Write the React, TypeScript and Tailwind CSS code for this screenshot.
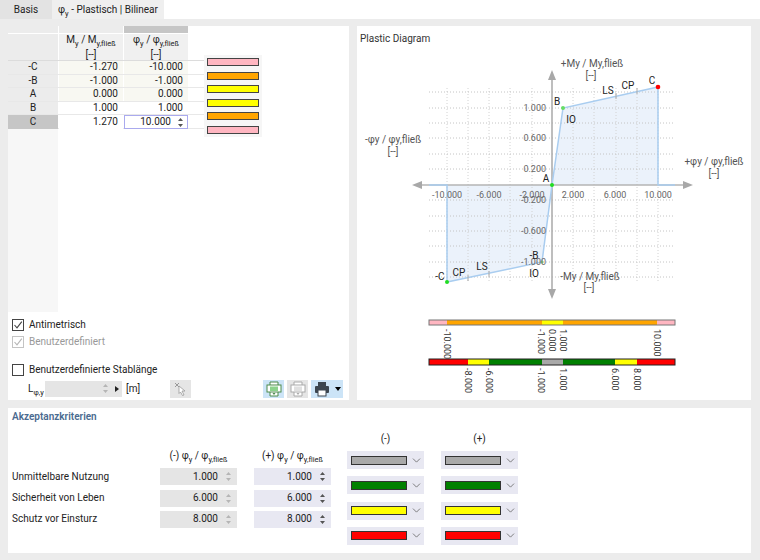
import { ChevronDown } from "lucide-react";

const rowsData = [
  { label: "-C", a: "-1.270", b: "-10.000", tint: true },
  { label: "-B", a: "-1.000", b: "-1.000", tint: true },
  { label: "A", a: "0.000", b: "0.000", tint: true },
  { label: "B", a: "1.000", b: "1.000", tint: false },
  { label: "C", a: "1.270", b: "10.000", tint: false, active: true },
];

const swatches = ["bg-[#ffb6c1]", "bg-[#ffa500]", "bg-[#ffff00]", "bg-[#ffff00]", "bg-[#ffa500]", "bg-[#ffb6c1]"];

const criteria = [
  { label: "Unmittelbare Nutzung", value: "1.000" },
  { label: "Sicherheit von Leben", value: "6.000" },
  { label: "Schutz vor Einsturz", value: "8.000" },
];

const dropdowns = ["bg-[#a9a9a9]", "bg-[#008000]", "bg-[#ffff00]", "bg-[#ff0000]"];

function Ratio({ sym }: { sym: string }) {
  return (
    <span className="whitespace-nowrap">
      {sym}
      <sub className="text-[7.5px] align-[-2px]">y</sub> / {sym}
      <sub className="text-[7.5px] align-[-2px]">y,fließ</sub>
    </span>
  );
}

function Spinner({ light }: { light?: boolean }) {
  return (
    <svg width="7" height="13" viewBox="0 0 7 13" className={light ? "fill-[#b5b5b5]" : "fill-[#555]"}>
      <path d="M3.5 2 L6 5 H1 Z M1 8 H6 L3.5 11 Z" />
    </svg>
  );
}

function Check({ disabled }: { disabled?: boolean }) {
  return (
    <span
      className={`flex h-[12px] w-[12px] items-center justify-center border ${
        disabled ? "border-[#c4c4c4]" : "border-[#444]"
      }`}
    >
      <svg width="10" height="10" viewBox="0 0 10 10" fill="none" stroke={disabled ? "#b5b5b5" : "#444"} strokeWidth="1.1">
        <path d="M1.5 5 L4 7.8 L8.8 1.6" />
      </svg>
    </span>
  );
}

function SheetIcon({ color, fill }: { color: string; fill: string }) {
  return (
    <svg width="16" height="16" viewBox="0 0 16 16">
      <path d="M4 1 H12 V15 H4 Z" fill="#fff" stroke={color} />
      <rect x="1" y="4" width="14" height="7" fill="#fff" stroke={color} />
      <rect x="4" y="5.5" width="8" height="4.5" fill={fill} />
      <path d="M6.5 12 H9.5 L8 14 Z" fill={color} />
    </svg>
  );
}

function Diagram() {
  const gridX = [447, 468, 489, 510, 532, 573, 594, 616, 637, 658];
  const gridY = [92, 108, 123, 138, 154, 169, 200, 216, 231, 246, 262, 277];
  const xTicks = [
    [447, "-10.000"],
    [489, "-6.000"],
    [532, "-2.000"],
    [573, "2.000"],
    [615, "6.000"],
    [658, "10.000"],
  ] as const;
  const yTicks = [
    [108, "1.000"],
    [138, "0.600"],
    [169, "0.200"],
    [200, "-0.200"],
    [231, "-0.600"],
    [262, "-1.000"],
  ] as const;
  const pointLabels = [
    [652, 80, "C"],
    [628, 85, "CP"],
    [608, 90, "LS"],
    [557, 101, "B"],
    [571, 119, "IO"],
    [546, 178, "A"],
    [440, 276, "-C"],
    [459, 272, "CP"],
    [482, 266, "LS"],
    [534, 255, "-B"],
    [534, 273, "IO"],
  ] as const;
  const axisLabels = [
    [592, 63, "+My / My,fließ"],
    [591, 75, "[--]"],
    [393, 139, "-φy / φy,fließ"],
    [393, 151, "[--]"],
    [714, 161, "+φy / φy,fließ"],
    [714, 173, "[--]"],
    [590, 276, "-My / My,fließ"],
    [589, 287, "[--]"],
  ] as const;
  const topBar = [
    [429, 447, "#ffb6c1"],
    [447, 542, "#ffa500"],
    [542, 563, "#ffff00"],
    [563, 657, "#ffa500"],
    [657, 675, "#ffb6c1"],
  ] as const;
  const lowBar = [
    [429, 468, "#ff0000"],
    [468, 489, "#ffff00"],
    [489, 542, "#008000"],
    [542, 563, "#a9a9a9"],
    [563, 615, "#008000"],
    [615, 637, "#ffff00"],
    [637, 675, "#ff0000"],
  ] as const;
  const topLabels = [
    [447, "-10.000"],
    [541, "-1.000"],
    [552, "0.000"],
    [563, "1.000"],
    [657, "10.000"],
  ] as const;
  const lowLabels = [
    [468, "-8.000"],
    [489, "-6.000"],
    [541, "-1.000"],
    [563, "1.000"],
    [615, "6.000"],
    [637, "8.000"],
  ] as const;

  return (
    <svg viewBox="357 50 394 350" className="h-[350px] w-[394px] text-[10px]">
      <path d="M552 185 L563 108 L658 87 V185 Z M552 185 L542 262 L447 282 V185 Z" fill="#ebf2fb" />
      {gridX.map((x) => (
        <line key={x} x1={x} x2={x} y1={88} y2={283} stroke="#d2d2d2" strokeDasharray="1 2" />
      ))}
      {gridY.map((y) => (
        <line key={y} x1={429} x2={675} y1={y} y2={y} stroke="#c4c4c4" strokeDasharray="1 2" />
      ))}
      <line x1={418} x2={687} y1={185} y2={185} stroke="#b4b4b4" strokeWidth="1.5" />
      <line x1={552} x2={552} y1={76} y2={293} stroke="#a8a8a8" strokeWidth="1.5" />
      <path d="M412 185 L422 181 V189 Z M693 185 L683 181 V189 Z M552 70 L548 80 H556 Z M552 299 L548 289 H556 Z" fill="#a8a8a8" />
      <path
        d="M429 185 H447 V282 L542 262 L552 185 L563 108 L658 87 V185 H675"
        fill="none"
        stroke="#a9cdf0"
        strokeWidth="1.5"
      />
      {[616, 637].map((x) => (
        <line key={x} x1={x} x2={x} y1={x === 616 ? 93 : 88} y2={x === 616 ? 99 : 94} stroke="#aaa" />
      ))}
      {[468, 489].map((x) => (
        <line key={x} x1={x} x2={x} y1={x === 468 ? 275 : 271} y2={x === 468 ? 281 : 277} stroke="#aaa" />
      ))}
      <circle cx={552} cy={185} r={2} fill="#22dd22" />
      <circle cx={563} cy={108} r={2} fill="#66dd66" />
      <circle cx={658} cy={87} r={2.3} fill="#ff0000" />
      <circle cx={447} cy={282} r={2} fill="#22dd22" />
      <circle cx={542} cy={262} r={1.5} fill="#88dd88" />
      {xTicks.map(([x, t]) => (
        <text key={t} x={x} y={198} textAnchor="middle" fill="#666" className="text-[9px]">
          {t}
        </text>
      ))}
      {yTicks.map(([y, t]) => (
        <text key={t} x={546} y={y + 3} textAnchor="end" fill="#666" className="text-[9px]">
          {t}
        </text>
      ))}
      {pointLabels.map(([x, y, t]) => (
        <text key={`${t}${x}`} x={x} y={y + 4} textAnchor="middle" fill="#222">
          {t}
        </text>
      ))}
      {axisLabels.map(([x, y, t]) => (
        <text key={`${t}${x}`} x={x} y={y + 4} textAnchor="middle" fill="#555">
          {t}
        </text>
      ))}
      {topBar.map(([a, b, c]) => (
        <rect key={a} x={a} y={320} width={b - a} height={5} fill={c} />
      ))}
      <rect x={429} y={320} width={246} height={5} fill="none" stroke="#777" />
      {lowBar.map(([a, b, c]) => (
        <rect key={a} x={a} y={359} width={b - a} height={6} fill={c} />
      ))}
      <rect x={429} y={359} width={246} height={6} fill="none" stroke="#222" />
      {topLabels.map(([x, t]) => (
        <text key={t} x={x - 3} y={329} transform={`rotate(90 ${x - 3} 329)`} fill="#333" className="text-[9px]">
          {t}
        </text>
      ))}
      {lowLabels.map(([x, t]) => (
        <text key={t} x={x - 3} y={368} transform={`rotate(90 ${x - 3} 368)`} fill="#333" className="text-[9px]">
          {t}
        </text>
      ))}
    </svg>
  );
}

function Dropdown({ color }: { color: string }) {
  return (
    <div className="flex h-[18px] w-[77px] items-center bg-[#e8e8f2] pl-[4px]">
      <div className={`h-[9px] w-[56px] border border-[#333] ${color}`} />
      <ChevronDown className="ml-[3px] h-[13px] w-[13px] text-[#666]" strokeWidth={1.5} />
    </div>
  );
}

function ValueBox({ value, tone }: { value: string; tone: "gray" | "blue" }) {
  return (
    <div
      className={`flex h-[17px] w-[77px] items-center justify-end pr-[5px] text-[#222] ${
        tone === "gray" ? "bg-[#e5e5e5]" : "bg-[#e8e8f2]"
      }`}
    >
      <span className="mr-[7px]">{value}</span>
      <Spinner light={tone === "gray"} />
    </div>
  );
}

export default function App() {
  return (
    <div className="flex h-[560px] w-[760px] flex-col overflow-hidden bg-[#ececec] font-['Roboto',sans-serif] text-[10px] leading-none text-[#222]">
      {/* Tabs */}
      <div className="flex h-[19px] bg-white">
        <div className="flex w-[52px] items-center justify-center bg-[#e3e3e3]">Basis</div>
        <div className="flex w-[112px] items-center justify-center whitespace-nowrap bg-[#efefef]">
          <span>
            φ<sub className="text-[7.5px] align-[-2px]">y</sub> - Plastisch | Bilinear
          </span>
        </div>
      </div>

      <div className="flex gap-[8px] px-[8px] pt-[7px]">
        {/* Left panel */}
        <div className="relative flex h-[374px] w-[341px] flex-col bg-white">
          <div className="flex h-[286px]">
            <div className="flex w-[196px] flex-col">
              <div className="grid grid-cols-[50px_64px_64px] gap-x-px">
                <div className="h-[7px] bg-[#ececec]" />
                <div className="h-[7px] bg-[#ececec]" />
                <div className="h-[7px] bg-[#c6c6c6]" />
              </div>
              <div className="mt-px grid grid-cols-[50px_64px_64px] gap-x-px border-b border-[#dcdcdc]">
                <div className="h-[26px] bg-[#ececec]" />
                <div className="flex h-[26px] flex-col items-center justify-center gap-[5px] bg-[#f0f0f0]">
                  <Ratio sym="M" />
                  <span>[--]</span>
                </div>
                <div className="flex h-[26px] flex-col items-center justify-center gap-[5px] bg-[#f0f0f0]">
                  <Ratio sym="φ" />
                  <span>[--]</span>
                </div>
              </div>
              {rowsData.map((r) => (
                <div key={r.label} className="grid h-[13.6px] grid-cols-[50px_64px_64px] gap-x-px border-b border-[#e8e8e8]">
                  <div className={`flex items-center justify-center ${r.active ? "bg-[#c6c6c6]" : "bg-[#ececec]"}`}>{r.label}</div>
                  <div className={`flex items-center justify-end pr-[5px] ${r.tint ? "bg-[#f8f8f2]" : "bg-white"}`}>{r.a}</div>
                  {r.active ? (
                    <div className="flex h-[14px] items-center justify-end border border-[#aaaaee] bg-white pr-[3px]">
                      <span className="mr-[6px]">{r.b}</span>
                      <Spinner />
                    </div>
                  ) : (
                    <div className={`flex items-center justify-end pr-[5px] ${r.tint ? "bg-[#f8f8f2]" : "bg-white"}`}>{r.b}</div>
                  )}
                </div>
              ))}
              <div className="w-[50px] flex-1 bg-[#f7f7f7]" />
            </div>
            <div className="mt-[29px] flex h-[82px] w-[58px] flex-col items-center gap-[5.6px] bg-[#f6f6f6] pt-[3px]">
              {swatches.map((c, i) => (
                <div key={i} className={`h-[8px] w-[52px] shrink-0 border border-[#444] ${c}`} />
              ))}
            </div>
          </div>

          <div className="flex flex-col pl-[4px]">
            <div className="mt-[7px] flex items-center gap-[5px]">
              <Check />
              <span>Antimetrisch</span>
            </div>
            <div className="mt-[5px] flex items-center gap-[5px] text-[#999]">
              <Check disabled />
              <span>Benutzerdefiniert</span>
            </div>
            <div className="mt-[16px] flex items-center gap-[5px]">
              <span className="h-[12px] w-[12px] border border-[#444]" />
              <span>Benutzerdefinierte Stablänge</span>
            </div>
            <div className="mt-[3px] flex h-[19px] items-center">
              <span className="ml-[16px] w-[17px]">
                L<sub className="text-[7.5px] align-[-2px]">φ,y</sub>
              </span>
              <div className="flex h-[16px] w-[77px] items-center justify-end bg-[#e5e5e5] pr-[3px]">
                <Spinner light />
                <span className="ml-[6px] h-0 w-0 border-y-[3px] border-l-[4px] border-y-transparent border-l-[#222]" />
              </div>
              <span className="ml-[4px]">[m]</span>
              <div className="ml-[30px] flex h-[18px] w-[21px] items-center justify-center bg-[#e5e5e5]">
                <svg width="14" height="14" viewBox="0 0 14 14">
                  <path d="M1 1 L5 5 M5 1 L1 5" stroke="#999" />
                  <path d="M5 4 L11 9 H8 L10 13 L8.5 13.5 L6.5 10 L5 11.5 Z" fill="#fff" stroke="#999" strokeWidth="0.8" />
                </svg>
              </div>
              <div className="ml-[72px] flex h-[18px] w-[21px] items-center justify-center bg-[#cce4f7]">
                <SheetIcon color="#4c8a4c" fill="#8cd28c" />
              </div>
              <div className="ml-[3px] flex h-[18px] w-[21px] items-center justify-center bg-[#e5e5e5]">
                <SheetIcon color="#aaa" fill="#e0e0e0" />
              </div>
              <div className="ml-[3px] flex h-[18px] w-[32px] items-center gap-[5px] bg-[#cce4f7] pl-[3px]">
                <svg width="16" height="16" viewBox="0 0 16 16">
                  <rect x="4" y="1" width="8" height="4" fill="#3c4650" />
                  <rect x="1" y="5" width="14" height="7" rx="1" fill="#3c4650" />
                  <rect x="4" y="9" width="8" height="6" fill="#fff" stroke="#3c4650" />
                </svg>
                <span className="h-0 w-0 border-x-[3.5px] border-t-[4px] border-x-transparent border-t-black" />
              </div>
            </div>
          </div>
        </div>

        {/* Right panel */}
        <div className="flex h-[374px] w-[394px] flex-col bg-white">
          <div className="h-[24px] pl-[3px] pt-[8px] text-[#333]">Plastic Diagram</div>
          <Diagram />
        </div>
      </div>

      {/* Bottom panel */}
      <div className="mx-[8px] mt-[8px] flex h-[145px] w-[743px] flex-col bg-white pl-[4px]">
        <div className="mt-[4px] font-semibold text-[#4a6a8f]">Akzeptanzkriterien</div>
        <div className="flex">
          <div className="mt-[46px] w-[148px]">
            {criteria.map((c) => (
              <div key={c.label} className="mb-[4.3px] flex h-[17px] items-center">
                {c.label}
              </div>
            ))}
          </div>
          <div className="mt-[27px] flex w-[94px] flex-col gap-[4.3px]">
            <div className="mb-[2px] flex h-[13px] w-[77px] items-center justify-center whitespace-nowrap">
              (-)&nbsp;<Ratio sym="φ" />
            </div>
            {criteria.map((c) => (
              <ValueBox key={c.label} value={c.value} tone="gray" />
            ))}
          </div>
          <div className="mt-[27px] flex w-[93px] flex-col gap-[4.3px]">
            <div className="mb-[2px] flex h-[13px] w-[77px] items-center justify-center whitespace-nowrap">
              (+)&nbsp;<Ratio sym="φ" />
            </div>
            {criteria.map((c) => (
              <ValueBox key={c.label} value={c.value} tone="blue" />
            ))}
          </div>
          {["(-)", "(+)"].map((h, i) => (
            <div key={h} className={`mt-[10px] flex flex-col ${i === 0 ? "w-[94px]" : "w-[77px]"}`}>
              <div className="mb-[6px] flex h-[13px] w-[77px] items-center justify-center">{h}</div>
              <div className="flex flex-col gap-[7.3px]">
                {dropdowns.map((c) => (
                  <Dropdown key={c} color={c} />
                ))}
              </div>
            </div>
          ))}
        </div>
      </div>
    </div>
  );
}
